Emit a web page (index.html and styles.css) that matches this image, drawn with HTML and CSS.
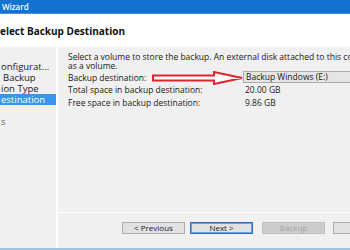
FILE: index.html
```html
<!DOCTYPE html>
<html lang="en">
<head>
    <meta charset="UTF-8">
    <meta name="viewport" content="width=device-width, initial-scale=1.0">
    <title>Backup Once Wizard</title>
    <link rel="stylesheet" href="styles.css">
</head>
<body>
    <div class="window">
        <div class="titlebar">Wizard</div>

        <div class="header">
            <h1>elect Backup Destination</h1>
        </div>

        <div class="main">
            <ul class="nav">
                <li>onfigurat...</li>
                <li class="indent">Backup</li>
                <li>ion Type</li>
                <li class="selected">estination</li>
                <li></li>
                <li class="muted">s</li>
            </ul>

            <div class="content">
                <div class="body">
                    <p class="intro">Select a volume to store the backup. An external disk attached to this computer will be listed<br>as a volume.</p>

                    <div class="fields">
                        <span class="label">Backup destination:</span>
                        <div class="combo">Backup Windows (E:)</div>

                        <span class="label">Total space in backup destination:</span>
                        <span class="value">20.00 GB</span>

                        <span class="label">Free space in backup destination:</span>
                        <span class="value">9.86 GB</span>

                        <!-- red arrow drawn on top of the screenshot -->
                        <svg class="arrow" width="92" height="14" viewBox="0 0 92 14">
                            <polygon points="1,4.5 62,4.5 62,1 90,7 62,13 62,9.5 1,9.5" fill="#fff" stroke="#e2232b" stroke-width="2" stroke-linejoin="miter"/>
                        </svg>
                    </div>
                </div>

                <div class="footer">
                    <button class="btn">&lt; Previous</button>
                    <button class="btn default">Next &gt;</button>
                    <button class="btn" disabled>Backup</button>
                    <button class="btn">Cancel</button>
                </div>
            </div>
        </div>
    </div>
</body>
</html>
```

FILE: styles.css
```css
html, body {
    margin: 0;
    padding: 0;
}
body {
    font-family: 'Open Sans', 'Liberation Sans', sans-serif;
    font-size: 8.5px;
    color: #1a1a1a;
    background-color: #fff;
}
.window {
    width: 350px;
    height: 250px;
    overflow: hidden;
    display: flex;
    flex-direction: column;
}
.titlebar {
    height: 13px;
    line-height: 13px;
    padding-left: 2px;
    background-color: #1273d0;
    border-bottom: 1px solid #3d93e0;
    color: #fff;
    font-size: 8px;
    font-weight: 600;
}
.header {
    height: 33px;
    display: flex;
    align-items: center;
    background-color: #fff;
}
h1 {
    margin: 0;
    padding-top: 1px;
    font-family: 'Open Sans', sans-serif;
    font-size: 10px;
    font-weight: bold;
    color: #111;
}
.main {
    flex: 1;
    display: flex;
    background-color: #f0f0f0;
    border-bottom: 2px solid #9cc4e6;
}
.nav {
    flex: none;
    list-style: none;
    margin: 0;
    padding: 14px 0 0 0;
    width: 56px;
    border-right: 2px solid #fff;
    font-size: 9.5px;
}
.nav li {
    height: 11px;
    line-height: 11px;
    padding-left: 1px;
    white-space: nowrap;
    overflow: hidden;
}
.nav li.indent {
    padding-left: 3px;
}
.nav li.selected {
    background-color: #3796ec;
    color: #fff;
}
.nav li.muted {
    color: #666;
}
.content {
    flex: 1;
    min-width: 0;
    display: flex;
    flex-direction: column;
}
.body {
    flex: 1;
    padding: 5px 0 0 10px;
    overflow: hidden;
}
.intro {
    margin: 0;
    line-height: 9px;
    white-space: nowrap;
}
.fields {
    position: relative;
    margin-top: 1px;
    display: grid;
    grid-template-columns: 175px 1fr;
    grid-auto-rows: 12.5px;
    align-items: center;
}
.label {
    white-space: nowrap;
}
.combo {
    height: 10px;
    line-height: 10px;
    margin-right: -20px;
    padding-left: 2px;
    background-color: #e5e5e5;
    border: 1px solid #adadad;
    white-space: nowrap;
}
.value {
    padding-left: 2px;
}
.arrow {
    position: absolute;
    left: 84px;
    top: 0;
}
.footer {
    height: 26px;
    border-top: 1px solid #fff;
    display: flex;
    align-items: flex-start;
    gap: 5px;
    padding: 9px 0 0 64px;
    overflow: hidden;
}
.btn {
    flex: none;
    width: 63px;
    height: 12px;
    padding: 0;
    font-family: inherit;
    font-size: 8px;
    line-height: 10px;
    color: #1a1a1a;
    background-color: #e1e1e1;
    border: 1px solid #adadad;
}
.btn.default {
    border: 1px solid #2a73bd;
    box-shadow: inset 0 0 0 1px #6aa3d8;
}
.btn:disabled {
    color: #a3a3a3;
    background-color: #cccccc;
    border-color: #bfbfbf;
    margin-left: 4px;
}
.btn:disabled + .btn {
    margin-left: 3px;
}
```
